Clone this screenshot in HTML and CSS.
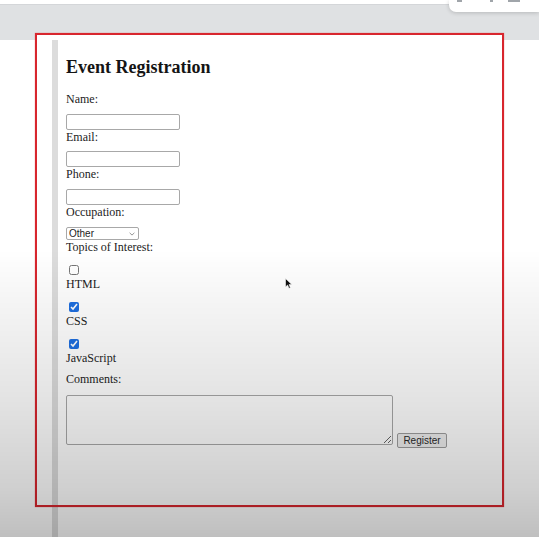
FILE: index.html
```html
<!DOCTYPE html>
<html lang="en">
<head>
<meta charset="utf-8">
<title>Event Registration</title>
<link rel="stylesheet" href="styles.css">
</head>
<body>
<div class="browser-strip"></div>
<div class="browser-band"></div>
<div class="page">
  <main class="content">
    <h2 class="title">Event Registration</h2>
    <form class="form">
      <label class="lbl" for="name">Name:</label>
      <input class="field" id="name" type="text">
      <label class="lbl" for="email">Email:</label>
      <input class="field" id="email" type="email">
      <label class="lbl" for="phone">Phone:</label>
      <input class="field" id="phone" type="tel">
      <label class="lbl" for="occ">Occupation:</label>
      <span class="select-wrap">
        <select class="select" id="occ">
          <option>Student</option>
          <option>Professional</option>
          <option selected>Other</option>
        </select>
        <svg class="chev" viewBox="0 0 6 4" width="6" height="4"><path d="M0.6 0.8 L3 3.1 L5.4 0.8" fill="none" stroke="#8a8a8a" stroke-width="0.9"/></svg>
      </span>
      <span class="lbl">Topics of Interest:</span>
      <div class="check"><input type="checkbox" id="t1"></div>
      <label class="lbl" for="t1">HTML</label>
      <div class="check"><input type="checkbox" id="t2" checked></div>
      <label class="lbl" for="t2">CSS</label>
      <div class="check"><input type="checkbox" id="t3" checked></div>
      <label class="lbl" for="t3">JavaScript</label>
      <label class="lbl lbl-comments" for="cm">Comments:</label>
      <div class="submit-row">
        <textarea class="comments" id="cm"></textarea>
        <button class="btn" type="button">Register</button>
      </div>
    </form>
  </main>
</div>
<div class="popup"><span class="mark m1"></span><span class="mark m2"></span><span class="mark m3"></span></div>
<div class="redbox"></div>
<svg class="cursor" viewBox="0 0 8 11" width="8" height="11"><path d="M0.5 0.5 L0.5 9 L2.6 7.1 L4 10.3 L5.4 9.7 L4 6.6 L6.8 6.6 Z" fill="#111" stroke="#fff" stroke-width="0.6"/></svg>
<div class="vignette"></div>
</body>
</html>
```
FILE: styles.css
```css
html, body {
  margin: 0;
  padding: 0;
}
body {
  position: relative;
  background: #ffffff;
  font-family: "Liberation Serif", "Times New Roman", serif;
  font-size: 12px;
  color: #1c1c1c;
  min-height: 537px;
  overflow: hidden;
}
.browser-strip {
  height: 4px;
  background: #ffffff;
  border-bottom: 1px solid #d4d6d9;
}
.browser-band {
  height: 35px;
  background: #dfe1e3;
}
.page {
  display: flex;
  padding-left: 52px;
  min-height: 497px;
}
.content {
  flex: 1;
  border-left: 6px solid #dcdcdc;
  padding: 17px 0 0 8px;
}
.title {
  margin: 0;
  font-size: 18px;
  line-height: 21px;
  font-weight: bold;
  color: #141414;
}
.form {
  display: flex;
  flex-direction: column;
  align-items: flex-start;
  margin-top: 14px;
}
.lbl {
  display: block;
  line-height: 14px;
}
.field {
  box-sizing: border-box;
  width: 114px;
  height: 16px;
  margin: 7.5px 0 0 0;
  padding: 0 3px;
  border: 1px solid #a8a8a8;
  border-radius: 2px;
  background: #fff;
  font-size: 10px;
}
.select-wrap {
  position: relative;
  display: flex;
  margin-top: 8px;
}
.select {
  -webkit-appearance: none;
  appearance: none;
  box-sizing: border-box;
  width: 73px;
  height: 13.5px;
  margin: 0;
  padding: 0 0 0 2px;
  border: 1px solid #a8a8a8;
  border-radius: 2px;
  background: #fff;
  font-family: "Liberation Sans", Arial, sans-serif;
  font-size: 10px;
  line-height: 11px;
  color: #222;
}
.chev {
  position: absolute;
  left: 63px;
  top: 5px;
  pointer-events: none;
}
.check {
  display: flex;
  padding: 11px 0 2px 3px;
}
.check input {
  width: 10px;
  height: 10px;
  margin: 0;
  accent-color: #1f6fe0;
}
.lbl-comments {
  margin-top: 7px;
}
.submit-row {
  display: flex;
  align-items: flex-start;
  gap: 4px;
  margin-top: 8.5px;
}
.comments {
  box-sizing: border-box;
  width: 327px;
  height: 50px;
  margin: 0;
  border: 1px solid #a8a8a8;
  border-radius: 2px;
  background: #fff;
}
.btn {
  box-sizing: border-box;
  width: 50px;
  height: 15px;
  margin-top: 38.6px;
  padding: 0;
  border: 1px solid #9e9e9e;
  border-radius: 2px;
  background: #efefef;
  font-family: "Liberation Sans", Arial, sans-serif;
  font-size: 10px;
  line-height: 13px;
  color: #2a2a2a;
}
.popup {
  position: absolute;
  top: 0;
  right: 0;
  width: 90px;
  height: 12px;
  background: #fff;
  border-bottom-left-radius: 7px;
  box-shadow: 0 1px 4px rgba(0, 0, 0, 0.18);
  display: flex;
  align-items: flex-start;
  padding-left: 8px;
  box-sizing: border-box;
}
.mark {
  display: block;
  height: 2px;
  background: #a0a5aa;
}
.m1 { width: 5px; }
.m2 { width: 3px; margin-left: 28px; }
.m3 { width: 12px; margin-left: 15px; }
.redbox {
  position: absolute;
  left: 35px;
  top: 33px;
  width: 465px;
  height: 470px;
  border: 2px solid #d8262e;
  box-shadow: 0 0 1px rgba(216, 38, 46, 0.6);
  background: linear-gradient(#fff, #fff) top left / 100% 5px no-repeat;
}
.cursor {
  position: absolute;
  left: 285px;
  top: 278px;
}
.vignette {
  position: fixed;
  inset: 0;
  pointer-events: none;
  background: linear-gradient(to bottom,
    rgba(0, 0, 0, 0) 0,
    rgba(0, 0, 0, 0) 250px,
    rgba(0, 0, 0, 0.04) 300px,
    rgba(0, 0, 0, 0.11) 400px,
    rgba(0, 0, 0, 0.19) 490px,
    rgba(0, 0, 0, 0.25) 537px);
}
```
